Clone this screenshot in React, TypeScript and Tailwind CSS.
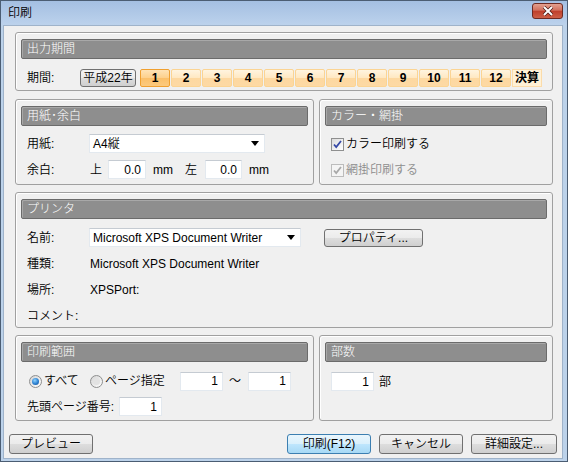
import React from 'react';

const font = "font-['Liberation_Sans','Noto_Sans_CJK_JP',sans-serif]";

const btnGray =
  'border border-[#707070] rounded-[3px] bg-[linear-gradient(to_bottom,#f2f2f2_0%,#ebebeb_50%,#dddddd_51%,#cfcfcf_100%)] flex items-center justify-center text-[12px] text-black';

const monthBtn =
  'w-[30px] h-[18px] border rounded-[2px] flex items-center justify-center text-[12px] font-bold text-black';

function Group({
  title,
  className,
  children,
}: {
  title: string;
  className?: string;
  children?: React.ReactNode;
}) {
  return (
    <div
      className={`border border-[#a0a0a0] rounded-[3px] shadow-[inset_1px_1px_0_#ffffff] px-[5px] pt-[6px] ${className ?? ''}`}
    >
      <div className="h-[20px] bg-[#8e8e8e] border border-[#6b6b6b] rounded-[2px] shadow-[inset_1px_1px_0_#a8a8a8] flex items-center pl-[5px] text-white text-[12px] font-[300]">
        {title}
      </div>
      {children}
    </div>
  );
}

function TextBox({ value, className }: { value: string; className?: string }) {
  return (
    <div
      className={`h-[19px] bg-white border border-[#e3e9ef] border-t-[#c5cbd2] flex items-center justify-end pr-[4px] text-[12px] ${className ?? ''}`}
    >
      {value}
    </div>
  );
}

function Select({ value, className }: { value: string; className?: string }) {
  return (
    <div
      className={`h-[19px] bg-white border border-[#e3e9ef] border-t-[#c5cbd2] flex items-center justify-between pl-[3px] pr-[5px] text-[12px] ${className ?? ''}`}
    >
      <span>{value}</span>
      <svg width="8" height="5" viewBox="0 0 8 5">
        <path d="M0 0h8L4 5z" fill="#000" />
      </svg>
    </div>
  );
}

function Checkbox({ label, disabled }: { label: string; disabled?: boolean }) {
  return (
    <div className="flex items-center gap-[2px] h-[14px]">
      <div
        className={`w-[13px] h-[13px] border flex items-center justify-center ${
          disabled
            ? 'border-[#bcbcbc] bg-[#f4f4f4]'
            : 'border-[#8e8f8f] bg-[linear-gradient(135deg,#dcdcdc_0%,#ffffff_100%)]'
        }`}
      >
        <svg width="9" height="9" viewBox="0 0 9 9">
          <path
            d="M1 4.5l2.2 2.5L8 1"
            fill="none"
            stroke={disabled ? '#a8a8a8' : '#3548a6'}
            strokeWidth="1.8"
          />
        </svg>
      </div>
      <span className={`text-[12px] ${disabled ? 'text-[#8d8d8d]' : 'text-black'}`}>{label}</span>
    </div>
  );
}

function Radio({ label, checked }: { label: string; checked?: boolean }) {
  return (
    <div className="flex items-center gap-[2px]">
      <div className="w-[13px] h-[13px] rounded-full border border-[#8e8f8f] bg-[linear-gradient(135deg,#d4d4d4_0%,#ffffff_100%)] flex items-center justify-center">
        {checked ? (
          <div className="w-[7px] h-[7px] rounded-full bg-[radial-gradient(circle_at_40%_35%,#8fd3ff_0%,#2a7fd0_55%,#1b4f8f_100%)]" />
        ) : (
          <div className="w-[7px] h-[7px] rounded-full bg-[#e2e2e2]" />
        )}
      </div>
      <span className="text-[12px]">{label}</span>
    </div>
  );
}

export default function App() {
  const months = ['1', '2', '3', '4', '5', '6', '7', '8', '9', '10', '11', '12'];

  return (
    <div
      className={`${font} font-[350] w-[568px] h-[462px] border border-[#4b5d73] bg-[#bcd2ea] flex flex-col text-black text-[12px] overflow-hidden`}
    >
      {/* Title bar */}
      <div className="h-[24px] shrink-0 bg-[linear-gradient(to_bottom,#a4bfe2_0%,#bcd2ec_100%)] flex items-center justify-between pl-[7px] pr-[4px]">
        <span className="text-[12px] text-black">印刷</span>
        <div className="w-[31px] h-[16px] mt-[-4px] rounded-[3px] border border-[#6e2a22] bg-[linear-gradient(to_bottom,#e3a08f_0%,#d2705d_45%,#bf3f2b_50%,#cd5f47_100%)] flex items-center justify-center">
          <svg width="12" height="10" viewBox="0 0 12 10">
            <path d="M2 1l8 8M10 1L2 9" stroke="#4a1a14" strokeWidth="3.4" />
            <path d="M2 1l8 8M10 1L2 9" stroke="#ffffff" strokeWidth="2" />
          </svg>
        </div>
      </div>

      {/* Client area */}
      <div className="flex-1 ml-[2px] mr-[4px] mb-[2px] bg-[#f0f0f0] border border-[#9fb3ca] flex flex-col">
        <div className="ml-[11px] w-[538px] pt-[6px] flex flex-col">
          {/* 出力期間 */}
          <Group title="出力期間" className="h-[59px]">
            <div className="flex items-center mt-[10px] pl-[6px]">
              <span className="w-[53px]">期間:</span>
              <div className={`${btnGray} w-[56px] h-[18px]`}>平成22年</div>
              <div className="flex gap-[1px] ml-[4px]">
                {months.map((m, i) => (
                  <div
                    key={m}
                    className={`${monthBtn} ${
                      i === 0
                        ? 'border-[#f0a030] bg-[linear-gradient(to_bottom,#ffe3b5_0%,#fdd08c_49%,#fbbf68_50%,#fcca7e_100%)]'
                        : 'border-[#fbd493] bg-[linear-gradient(to_bottom,#fff4e0_0%,#ffe8c2_49%,#fdd8a0_50%,#fdd9a4_100%)]'
                    }`}
                  >
                    {m}
                  </div>
                ))}
                <div className="w-[30px] h-[18px] border border-[#fbdcaa] bg-[#fff1d6] flex items-center justify-center text-[12px] font-bold">
                  決算
                </div>
              </div>
            </div>
          </Group>

          {/* 用紙・余白 / カラー・網掛 */}
          <div className="flex gap-[5px] mt-[8px]">
            <Group title="用紙･余白" className="w-[299px] h-[86px]">
              <div className="flex items-center mt-[8px] pl-[6px]">
                <span className="w-[62px]">用紙:</span>
                <Select value="A4縦" className="w-[176px]" />
              </div>
              <div className="flex items-center mt-[7px] pl-[6px]">
                <span className="w-[63px]">余白:</span>
                <span className="w-[18px]">上</span>
                <TextBox value="0.0" className="w-[38px]" />
                <span className="ml-[7px] w-[32px]">mm</span>
                <span className="w-[20px]">左</span>
                <TextBox value="0.0" className="w-[37px]" />
                <span className="ml-[7px]">mm</span>
              </div>
            </Group>
            <Group title="カラー・網掛" className="w-[234px] h-[86px]">
              <div className="flex flex-col gap-[12px] mt-[11px] pl-[6px]">
                <Checkbox label="カラー印刷する" />
                <Checkbox label="網掛印刷する" disabled />
              </div>
            </Group>
          </div>

          {/* プリンタ */}
          <Group title="プリンタ" className="h-[136px] mt-[7px] pt-[4px]">
            <div className="flex items-center mt-[9px] pl-[6px]">
              <span className="w-[62px]">名前:</span>
              <Select value="Microsoft XPS Document Writer" className="w-[212px]" />
              <div className={`${btnGray} w-[99px] h-[18px] ml-[23px]`}>プロパティ...</div>
            </div>
            <div className="flex items-center h-[26px] mt-[4px] pl-[6px]">
              <span className="w-[63px]">種類:</span>
              <span>Microsoft XPS Document Writer</span>
            </div>
            <div className="flex items-center h-[26px] pl-[6px]">
              <span className="w-[63px]">場所:</span>
              <span>XPSPort:</span>
            </div>
            <div className="flex items-center h-[26px] pl-[6px]">
              <span>コメント:</span>
            </div>
          </Group>

          {/* 印刷範囲 / 部数 */}
          <div className="flex gap-[5px] mt-[7px]">
            <Group title="印刷範囲" className="w-[299px] h-[86px]">
              <div className="flex items-center mt-[10px] pl-[8px] h-[18px]">
                <div className="w-[61px]">
                  <Radio label="すべて" checked />
                </div>
                <div className="w-[90px]">
                  <Radio label="ページ指定" />
                </div>
                <TextBox value="1" className="w-[43px] h-[18px]" />
                <span className="w-[25px] pl-[6px]">～</span>
                <TextBox value="1" className="w-[43px] h-[18px]" />
              </div>
              <div className="flex items-center mt-[7px] pl-[6px]">
                <span className="w-[92px]">先頭ページ番号:</span>
                <TextBox value="1" className="w-[43px] h-[18px]" />
              </div>
            </Group>
            <Group title="部数" className="w-[234px] h-[86px]">
              <div className="flex items-center mt-[10px] pl-[6px]">
                <TextBox value="1" className="w-[43px] h-[18px]" />
                <span className="ml-[5px]">部</span>
              </div>
            </Group>
          </div>
        </div>

        {/* Buttons */}
        <div className="ml-[5px] w-[548px] mt-[13px] flex items-center justify-between">
          <div className={`${btnGray} w-[84px] h-[20px]`}>プレビュー</div>
          <div className="flex gap-[8px]">
            <div className="w-[84px] h-[20px] border border-[#3c7fb1] rounded-[3px] bg-[linear-gradient(to_bottom,#eaf6fd_0%,#d9f0fc_50%,#bee6fd_51%,#a7d9f5_100%)] flex items-center justify-center text-[12px]">
              印刷(F12)
            </div>
            <div className={`${btnGray} w-[84px] h-[20px]`}>キャンセル</div>
            <div className={`${btnGray} w-[86px] h-[20px]`}>詳細設定...</div>
          </div>
        </div>
      </div>
    </div>
  );
}
